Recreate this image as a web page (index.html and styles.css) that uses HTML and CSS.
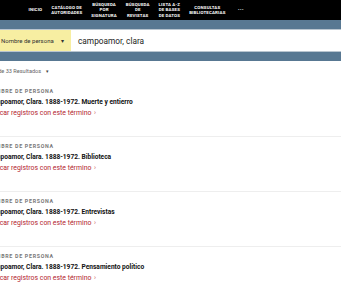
FILE: index.html
```html
<!DOCTYPE html>
<html lang="es">
<head>
    <meta charset="UTF-8">
    <title>Resultados</title>
    <link rel="stylesheet" href="styles.css">
</head>
<body>
<nav class="topnav">
    <a href="#" class="nav-item">Inicio</a>
    <a href="#" class="nav-item">Catálogo de<br>autoridades</a>
    <a href="#" class="nav-item">Búsqueda<br>por<br>signatura</a>
    <a href="#" class="nav-item">Búsqueda<br>de<br>revistas</a>
    <a href="#" class="nav-item">Lista A-Z<br>de bases<br>de datos</a>
    <a href="#" class="nav-item">Consultas<br>bibliotecarias</a>
    <a href="#" class="nav-item nav-more">•••</a>
</nav>

<div class="search-band">
    <div class="search-row">
        <div class="search-type">Nombre de persona <span class="caret">▾</span></div>
        <div class="search-input">campoamor, clara</div>
    </div>
</div>

<div class="results">
    <div class="results-count">1 - 10 de 33 Resultados <span class="caret">▾</span></div>

    <div class="record">
        <div class="record-type">Nombre de persona</div>
        <div class="record-title">Campoamor, Clara. 1888-1972. Muerte y entierro</div>
        <a href="#" class="record-link">Buscar registros con este término <span class="chev">›</span></a>
    </div>
    <div class="record">
        <div class="record-type">Nombre de persona</div>
        <div class="record-title">Campoamor, Clara. 1888-1972. Biblioteca</div>
        <a href="#" class="record-link">Buscar registros con este término <span class="chev">›</span></a>
    </div>
    <div class="record">
        <div class="record-type">Nombre de persona</div>
        <div class="record-title">Campoamor, Clara. 1888-1972. Entrevistas</div>
        <a href="#" class="record-link">Buscar registros con este término <span class="chev">›</span></a>
    </div>
    <div class="record">
        <div class="record-type">Nombre de persona</div>
        <div class="record-title">Campoamor, Clara. 1888-1972. Pensamiento político</div>
        <a href="#" class="record-link">Buscar registros con este término <span class="chev">›</span></a>
    </div>
</div>
</body>
</html>
```

FILE: styles.css
```css
body {
    margin: 0;
    font-family: Roboto, "Liberation Sans", sans-serif;
    background: #fff;
    overflow: hidden;
}

.topnav {
    background: #000;
    height: 20px;
    display: flex;
    align-items: center;
    padding-left: 24px;
}

.nav-item {
    color: #fff;
    text-decoration: none;
    text-transform: uppercase;
    font-weight: bold;
    font-size: 4.4px;
    line-height: 5.3px;
    text-align: center;
    letter-spacing: 0.15px;
    padding: 0 4.5px;
}

.nav-more {
    font-size: 4px;
    letter-spacing: 0.5px;
    padding-left: 8px;
}

.search-band {
    background: #587892;
    padding: 10px 0 9px;
}

.search-row {
    display: flex;
    height: 21px;
    border-top: 1px solid #b9c5cf;
    border-bottom: 1px solid #b9c5cf;
    margin-top: -1px;
}

.search-type {
    background: #f7eea2;
    width: 86px;
    margin-left: -15px;
    box-sizing: border-box;
    padding-left: 16px;
    font-size: 6px;
    color: #333;
    display: flex;
    align-items: center;
}

.search-type .caret {
    margin-left: 7px;
    font-size: 6px;
}

.search-input {
    flex: 1;
    background: #fff;
    padding-left: 7px;
    font-size: 8.3px;
    color: #222;
    display: flex;
    align-items: center;
}

.results {
    margin-left: -30px;
}

.results-count {
    margin-left: 13px;
    font-size: 5.6px;
    color: #666;
    line-height: 10px;
    padding: 5px 0 6px;
}

.results-count .caret {
    margin-left: 3px;
    font-size: 5px;
    color: #444;
}

.record {
    margin-left: 17px;
    height: 55px;
    border-bottom: 1px solid #eee;
    padding-top: 5px;
    box-sizing: border-box;
}

.record-type {
    font-size: 5.3px;
    font-weight: bold;
    color: #777;
    text-transform: uppercase;
    letter-spacing: 0.7px;
    line-height: 8px;
}

.record-title {
    font-size: 6.6px;
    font-weight: bold;
    color: #111;
    line-height: 11px;
    margin-top: 2px;
}

.record-link {
    display: block;
    font-size: 6.9px;
    color: #b3262f;
    text-decoration: none;
    line-height: 10px;
    margin-left: 1px;
}

.record-link .chev {
    color: #c55;
    font-size: 6.5px;
    margin-left: 1px;
}
```
